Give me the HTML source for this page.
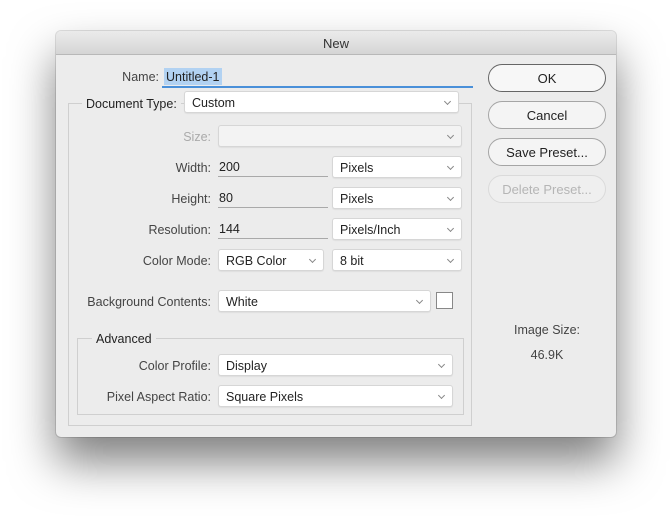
<!DOCTYPE html>
<html><head><style>
*{margin:0;padding:0;box-sizing:border-box}
body{width:672px;height:517px;background:#fff;position:relative;overflow:hidden;font-family:"Liberation Sans",sans-serif;font-size:12.5px;color:#222}
.dlg{position:absolute;left:56px;top:31px;width:560px;height:406px;background:#ececec;border-radius:5px;box-shadow:0 25px 45px rgba(0,0,0,.5),0 0 0 1px rgba(0,0,0,.12)}
.title{position:absolute;left:56px;top:31px;width:560px;height:24px;border-radius:5px 5px 0 0;background:linear-gradient(#ebebeb,#d5d5d5);border-bottom:1px solid #b8b8b8;text-align:center;line-height:25px;font-size:13px;color:#333}
.a{position:absolute}
.lbl{position:absolute;text-align:right;color:#444;white-space:nowrap}
.sel{position:absolute;background:#fff;border:1px solid #d6d6d6;border-radius:3px;height:22px;line-height:22px;padding-left:7px;box-shadow:0 1px 1px rgba(0,0,0,.06)}
.sel::after{content:"";position:absolute;right:8px;top:7px;width:4px;height:4px;border-right:1px solid #888;border-bottom:1px solid #888;transform:rotate(45deg)}
.dis{color:#aaa;background:#f3f3f3}
.inp{position:absolute;border-bottom:1px solid #a9a9a9;height:20px;line-height:21px;padding-left:1px}
.box{position:absolute;border:1px solid #cfcfcf}
.btn{position:absolute;left:488px;width:118px;height:28px;border:1px solid #a5a5a5;border-radius:14px;background:#f4f4f4;text-align:center;line-height:28px;font-size:13px}
</style></head><body>
<div class="dlg"></div>
<div class="title">New</div>

<div class="lbl" style="right:513px;top:70px">Name:</div>
<div class="a" style="left:164px;top:68px;height:17px;padding:0 2px;background:#b2d2f2;line-height:18px">Untitled-1</div>
<div class="a" style="left:162px;top:86px;width:311px;height:2px;background:#4a90d9"></div>

<div class="box" style="left:68px;top:103px;width:404px;height:323px"></div>
<div class="a" style="left:82px;top:97px;background:#ececec;padding:0 4px;line-height:14px">Document Type:</div>
<div class="sel" style="left:184px;top:91px;width:275px">Custom</div>

<div class="lbl" style="right:461px;top:130px;color:#aaa">Size:</div>
<div class="sel dis" style="left:218px;top:125px;width:244px"></div>

<div class="lbl" style="right:461px;top:161px">Width:</div>
<div class="inp" style="left:218px;top:157px;width:110px">200</div>
<div class="sel" style="left:332px;top:156px;width:130px">Pixels</div>

<div class="lbl" style="right:461px;top:192px">Height:</div>
<div class="inp" style="left:218px;top:188px;width:110px">80</div>
<div class="sel" style="left:332px;top:187px;width:130px">Pixels</div>

<div class="lbl" style="right:461px;top:223px">Resolution:</div>
<div class="inp" style="left:218px;top:219px;width:110px">144</div>
<div class="sel" style="left:332px;top:218px;width:130px">Pixels/Inch</div>

<div class="lbl" style="right:461px;top:254px">Color Mode:</div>
<div class="sel" style="left:218px;top:249px;width:106px">RGB Color</div>
<div class="sel" style="left:332px;top:249px;width:130px">8 bit</div>

<div class="lbl" style="right:461px;top:295px">Background Contents:</div>
<div class="sel" style="left:218px;top:290px;width:213px">White</div>
<div class="a" style="left:436px;top:292px;width:17px;height:17px;background:#fff;border:1px solid #888"></div>

<div class="box" style="left:77px;top:338px;width:387px;height:77px"></div>
<div class="a" style="left:92px;top:332px;background:#ececec;padding:0 4px;line-height:14px">Advanced</div>

<div class="lbl" style="right:461px;top:359px">Color Profile:</div>
<div class="sel" style="left:218px;top:354px;width:235px">Display</div>
<div class="lbl" style="right:461px;top:390px">Pixel Aspect Ratio:</div>
<div class="sel" style="left:218px;top:385px;width:235px">Square Pixels</div>

<div class="btn" style="top:64px;border-color:#666;background:#f7f7f7">OK</div>
<div class="btn" style="top:101px">Cancel</div>
<div class="btn" style="top:138px">Save Preset...</div>
<div class="btn" style="top:175px;color:#b5b5b5;border-color:#dadada;background:#efefef">Delete Preset...</div>

<div class="a" style="left:488px;top:323px;width:118px;text-align:center;color:#444">Image Size:</div>
<div class="a" style="left:488px;top:348px;width:118px;text-align:center;color:#444">46.9K</div>
</body></html>
